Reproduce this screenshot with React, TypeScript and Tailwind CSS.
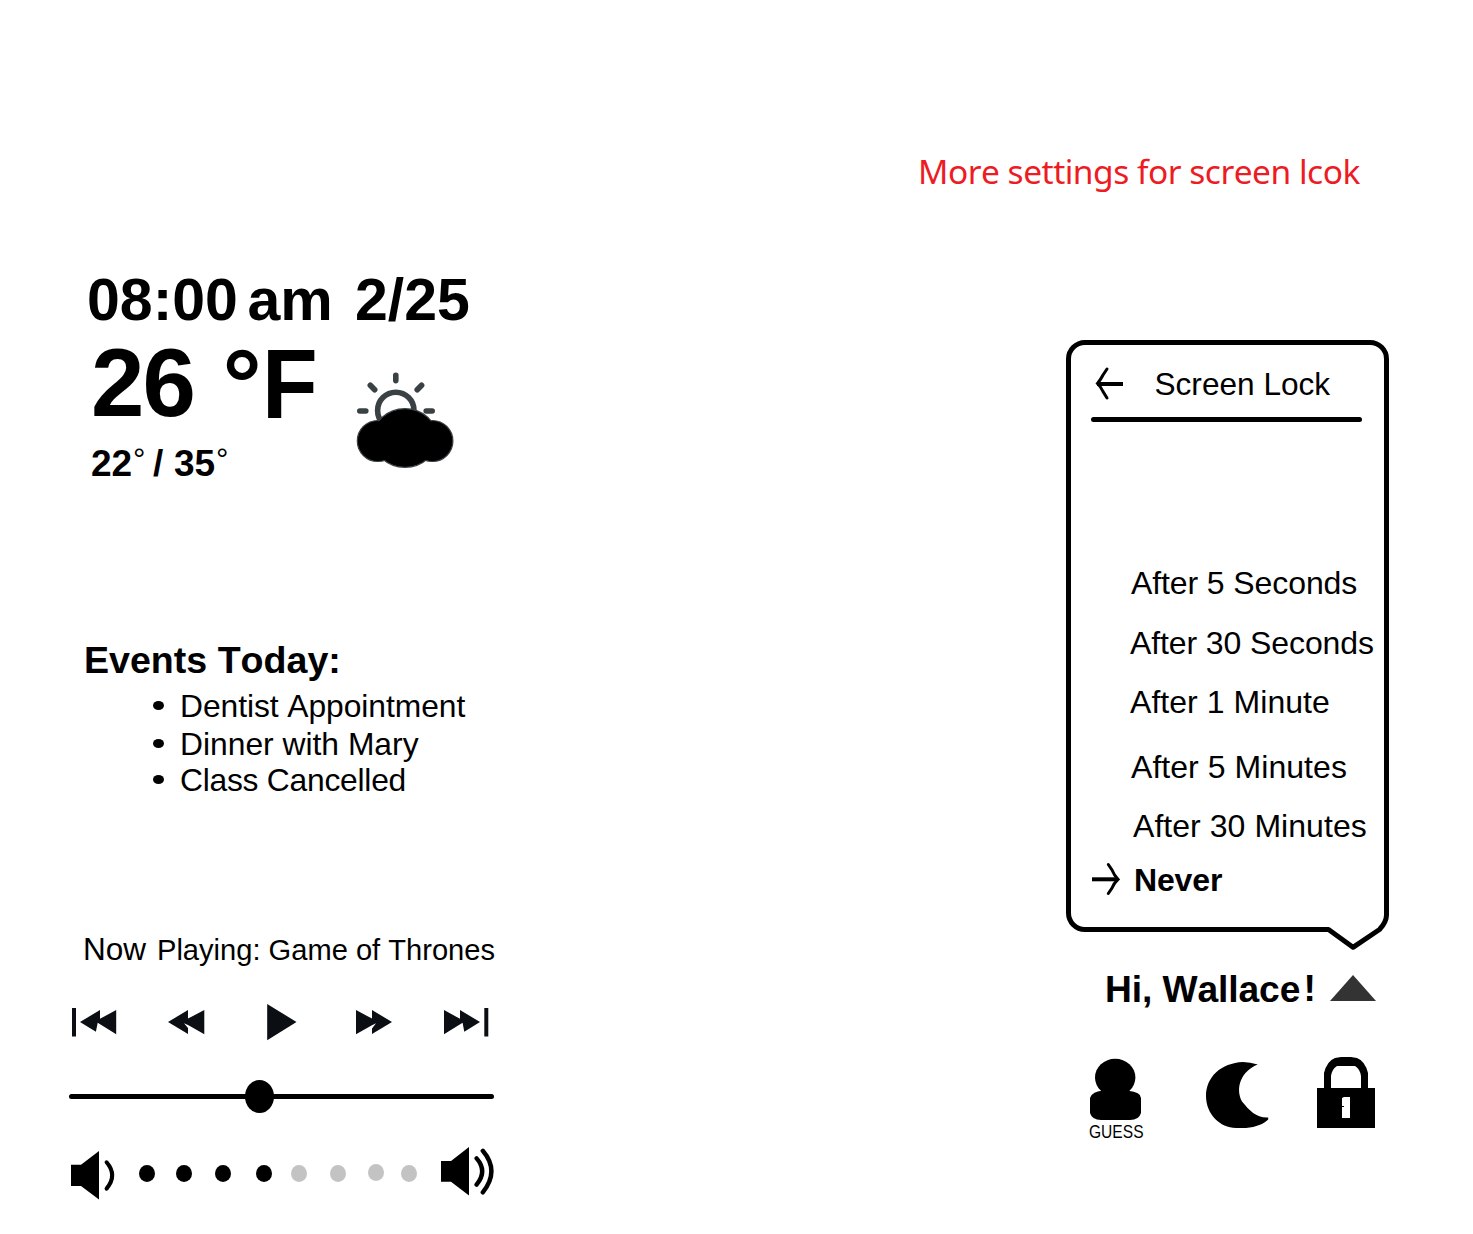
import React from "react";

const events = [
  { label: "Dentist Appointment", row: "mt-[8px] tracking-[-0.06px]" },
  { label: "Dinner with Mary", row: "mt-[2px]" },
  { label: "Class Cancelled", row: "tracking-[-0.25px]" },
];

const delays = [
  { label: "After 5 Seconds", row: "mt-[141px] ml-[60px] tracking-[-0.1px]" },
  { label: "After 30 Seconds", row: "mt-5 ml-[59px] tracking-[-0.1px]" },
  { label: "After 1 Minute", row: "mt-[19px] ml-[59px] tracking-[0.05px]" },
  { label: "After 5 Minutes", row: "mt-[25px] ml-[60px] tracking-[0.05px]" },
  { label: "After 30 Minutes", row: "mt-[19px] ml-[62px] tracking-[0.05px]" },
];

const volume = [
  { gap: "ml-[14px]", color: "bg-black" },
  { gap: "ml-[21px]", color: "bg-black" },
  { gap: "ml-[23px]", color: "bg-black" },
  { gap: "ml-[25px]", color: "bg-black" },
  { gap: "ml-[19px]", color: "bg-[#c3c3c3]" },
  { gap: "ml-[23px]", color: "bg-[#c3c3c3]" },
  { gap: "ml-[22px] -mt-[2px]", color: "bg-[#c3c3c3]" },
  { gap: "ml-[17px]", color: "bg-[#c3c3c3]" },
];

function WeatherIcon() {
  return (
    <svg className="mt-[26px] shrink-0" width="100" height="100" viewBox="355 370 100 100">
      <g stroke="#3a4144" strokeWidth="5.6" strokeLinecap="round" fill="none">
        <path d="M395.8 375.3V380.6M370.3 385.2L374.7 389.8M421.6 385.2L417.2 389.8M359.8 411H365.8M426.2 411H432.2" />
        <circle cx="395.8" cy="410.4" r="18.2" />
      </g>
      <g fill="#000" stroke="#3a4144" strokeWidth="1.4">
        <circle cx="377.8" cy="441" r="20.4" />
        <circle cx="432.4" cy="441" r="20.4" />
        <ellipse cx="405" cy="438" rx="32" ry="29.2" />
      </g>
      <rect x="375" y="424" width="60" height="36" fill="#000" />
      <circle cx="377.8" cy="441" r="19.7" />
      <circle cx="432.4" cy="441" r="19.7" />
      <ellipse cx="405" cy="438" rx="31.3" ry="28.5" />
    </svg>
  );
}

function Weather() {
  return (
    <section className="font-bold">
      <div className="ml-[87px] flex h-[60px] text-[59px] leading-[60px]">
        <span className="w-[160.5px]">08:00</span>
        <span className="w-[107.500px]">am</span>
        <span>2/25</span>
      </div>
      <div className="mt-[14px] ml-[91px] flex">
        <div className="w-[264px]">
          <div className="flex h-[80px] text-[98px] leading-[80px]">
            <span className="relative -top-px w-[131.500px] text-[96px] tracking-[-2px]">26</span>
            <span className="w-[39px]">°</span>
            <span className="origin-left scale-x-[0.93]">F</span>
          </div>
          <div className="mt-[17px] flex h-[46px] text-[37px] leading-[46px]">
            <span className="w-[42px]">22</span>
            <span className="relative -top-[4px] w-[20px] text-[31px] font-normal">°</span>
            <span className="w-[21px]">/</span>
            <span className="w-[42px]">35</span>
            <span className="relative -top-[4px] text-[31px] font-normal">°</span>
          </div>
        </div>
        <WeatherIcon />
      </div>
    </section>
  );
}

function Events() {
  return (
    <section className="mt-[153px]">
      <h2 className="ml-[84px] h-[40px] text-[37.6px] leading-[40px] font-bold">Events Today:</h2>
      <ul>
        {events.map((e) => (
          <li key={e.label} className={"ml-[153px] flex h-[36px] items-center text-[31.8px] leading-[36px] " + e.row}>
            <i className="mb-px h-[9px] w-[11px] rounded-[50%] bg-black" />
            <span className="ml-[16px]">{e.label}</span>
          </li>
        ))}
      </ul>
    </section>
  );
}

function Player() {
  return (
    <section className="mt-[131px]">
      <div className="ml-[83px] flex h-[40px] leading-[40px]">
        <span className="w-[74px] text-[31.5px]">Now</span>
        <span className="relative top-px text-[29.1px]">Playing: Game of Thrones</span>
      </div>
      <div className="mt-[33px] ml-[70px] flex h-[40px] fill-[#0b0e13]">
        <svg width="50" height="40" viewBox="70 1002 50 40">
          <path d="M72 1008H76V1036.6H72ZM80 1022L100 1010V1018.8L116.2 1010V1034.2L97.7 1022.8L95.9 1031.8Z" />
        </svg>
        <svg className="ml-[46px]" width="42" height="40" viewBox="166 1002 42 40">
          <path d="M168 1022L188 1010V1018.6L204.3 1010V1034.3L188.5 1025.2L184 1023.3L188 1028V1034Z" />
        </svg>
        <svg className="ml-[57px]" width="34" height="40" viewBox="265 1002 34 40">
          <path d="M267.2 1004L296.5 1022L267.2 1040.2Z" />
        </svg>
        <svg className="ml-[55px]" width="42" height="40" viewBox="354 1002 42 40">
          <path d="M356 1010L372 1018.6V1010L392 1022L372 1034V1028.5L376 1023.3L371.5 1025.4L356 1034.3Z" />
        </svg>
        <svg className="ml-[46px]" width="50" height="40" viewBox="442 1002 50 40">
          <path d="M484.3 1008H488.3V1036.6H484.3ZM480 1022L460 1010V1018.8L444 1010V1034.2L462.6 1022.8L464.3 1031.8Z" />
        </svg>
      </div>
      <div className="relative mt-[37px] ml-[69px] flex h-[34px] w-[425px] items-center">
        <div className="h-[5px] w-full rounded-full bg-black" />
        <div className="absolute top-[0.500px] left-[176px] h-[33px] w-[29px] rounded-[50%] bg-black" />
      </div>
      <div className="mt-[32px] ml-[69px] flex h-[56px] items-center">
        <svg width="56" height="56" viewBox="69 1145 56 56">
          <path d="M71 1164.7H81L99 1151V1199.6L81 1186H71Z" />
          <path d="M106.6 1162.3Q117.8 1175.3 106.6 1188.6" fill="none" stroke="#000" strokeWidth="4" strokeLinecap="round" />
        </svg>
        {volume.map((v, i) => (
          <i key={i} className={"h-[17px] w-[16px] shrink-0 rounded-[50%] " + v.gap + " " + v.color} />
        ))}
        <svg className="ml-[22px]" width="56" height="56" viewBox="439 1145 56 56">
          <path d="M441 1161H451L469 1147V1195.6L451 1181.7H441Z" />
          <path d="M476.6 1158.4Q487.8 1171 476.6 1184.6M482.8 1150.8Q500 1171 482.8 1192.4" fill="none" stroke="#000" strokeWidth="4.4" strokeLinecap="round" />
        </svg>
      </div>
    </section>
  );
}

function ScreenLockBubble() {
  return (
    <div className="relative mt-[147px] ml-[166px] h-[592px] w-[323px] rounded-[19px] border-[5px] border-black pt-[19px]">
      <div className="ml-[23px] flex h-[40px] text-[31.6px] leading-[40px]">
        <svg width="32" height="40" viewBox="1094 364 32 40" fill="none" stroke="#000">
          <path d="M1097 384H1123" strokeWidth="4" />
          <path d="M1107 369L1103 375Q1101 379 1097.5 383.5Q1101 387 1103 391.5L1107 398" strokeWidth="3" strokeLinecap="round" />
        </svg>
        <h3 className="ml-[28.500px]">Screen Lock</h3>
      </div>
      <div className="mt-[13px] ml-5 h-[5px] w-[271px] rounded-full bg-black" />
      {delays.map((d) => (
        <div key={d.label} className={"h-[40px] text-[32px] leading-[40px] " + d.row}>
          {d.label}
        </div>
      ))}
      <div className="mt-[14px] ml-[19px] flex h-[40px] text-[32px] leading-[40px] font-bold">
        <svg width="32" height="40" viewBox="1090 860 32 40" fill="none" stroke="#000">
          <path d="M1092 879.3H1118" strokeWidth="4" />
          <path d="M1108.3 864.5L1112 870Q1114 875 1118 879.3Q1114 883 1112 888L1108.3 893.5" strokeWidth="3" strokeLinecap="round" />
        </svg>
        <span className="ml-[12px] tracking-[-0.15px]">Never</span>
      </div>
      <svg className="absolute top-[565px] left-[249px]" width="72" height="45" viewBox="1320 910 72 45">
        <path d="M1328 925H1370V912H1392V940H1328Z" fill="#fff" />
        <path d="M1320 929.5H1328.5L1353 947.3L1379.5 929.5Q1386.500 922 1386.500 915V910" fill="none" stroke="#000" strokeWidth="5" strokeLinejoin="round" />
      </svg>
    </div>
  );
}

function UserMenu() {
  return (
    <>
      <div className="mt-[34px] ml-[205px] flex h-[46px] text-[37.2px] leading-[46px] font-bold">
        <span className="w-[198.500px] tracking-[-0.1px]">Hi, Wallace</span>
        <span className="relative -top-px w-[26.500px]">!</span>
        <svg className="mt-[9px]" width="46" height="27" viewBox="0 0 46 27">
          <path d="M23 0L46 26H0Z" fill="#333" />
        </svg>
      </div>
      <div className="mt-[45px] ml-[188px] flex h-[86px]">
        <div className="w-[116px]">
          <svg width="56" height="65" viewBox="1088 1057 56 65">
            <ellipse cx="1115.2" cy="1077.5" rx="20.2" ry="18.8" />
            <path d="M1104 1090.7H1128Q1141 1092 1141 1098V1113Q1139 1120 1130 1120H1101Q1092 1120 1090 1113V1098Q1092 1091 1104 1090.7Z" />
          </svg>
          <div className="ml-px h-5 w-[64px] origin-left scale-x-[0.865] text-[18px] leading-5">GUESS</div>
        </div>
        <svg width="66" height="72" viewBox="1204 1057 66 72">
          <path d="M1257.8 1064.5Q1250 1062 1243 1062C1221 1063 1206 1077 1206 1096C1206 1114 1220 1128 1236 1128H1246C1256 1127 1264 1124 1268.2 1119.5V1117.5C1256 1118 1250 1111 1242 1101.500C1235 1088 1241 1071 1257.8 1064.5Z" />
        </svg>
        <svg className="ml-[46px]" width="60" height="72" viewBox="1316 1057 60 72">
          <path d="M1324 1089V1073Q1327 1061 1335 1058Q1346 1055.5 1357 1058Q1365 1061 1368 1073V1089H1361V1076Q1360 1069 1355 1066H1337Q1332 1069 1331 1076V1089Z" />
          <path fillRule="evenodd" d="M1317 1088H1375V1128H1317ZM1342 1098V1118H1350V1097H1344Z" />
          <path d="M1342 1106H1344V1107H1342Z" />
        </svg>
      </div>
    </>
  );
}

export default function App() {
  return (
    <main
      className="flex h-[1234px] w-[1473px] overflow-hidden bg-white whitespace-nowrap text-black [font-kerning:none]"
      style={{ fontFamily: '"Liberation Sans", Arial, sans-serif' }}
    >
      <div className="w-[900px] pt-[270px]">
        <Weather />
        <Events />
        <Player />
      </div>
      <div className="w-[573px] pt-[149px]">
        <h1
          className="ml-[18px] h-[44px] text-[33.5px] leading-[44px] tracking-[-0.5px] text-[#ed1c24]"
          style={{ fontFamily: '"Noto Sans", sans-serif' }}
        >
          More settings for screen lcok
        </h1>
        <ScreenLockBubble />
        <UserMenu />
      </div>
    </main>
  );
}
